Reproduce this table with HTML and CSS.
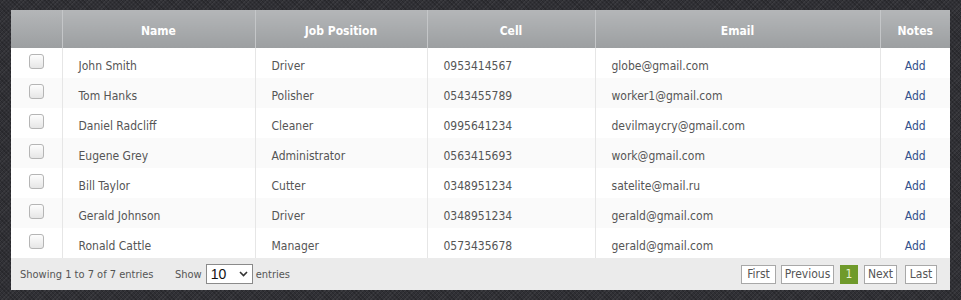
FILE: index.html
```html
<!DOCTYPE html>
<html>
<head>
<meta charset="utf-8">
<link rel="stylesheet" href="styles.css">
</head>
<body>
<div class="panel">
  <table class="grid">
    <colgroup>
      <col class="c-chk"><col class="c-name"><col class="c-job"><col class="c-cell"><col class="c-mail"><col class="c-notes">
    </colgroup>
    <thead>
      <tr><th></th><th>Name</th><th>Job Position</th><th>Cell</th><th>Email</th><th>Notes</th></tr>
    </thead>
    <tbody>
      <tr><td class="chk"><span class="box"></span></td><td>John Smith</td><td>Driver</td><td>0953414567</td><td>globe@gmail.com</td><td class="note"><a>Add</a></td></tr>
      <tr><td class="chk"><span class="box"></span></td><td>Tom Hanks</td><td>Polisher</td><td>0543455789</td><td>worker1@gmail.com</td><td class="note"><a>Add</a></td></tr>
      <tr><td class="chk"><span class="box"></span></td><td>Daniel Radcliff</td><td>Cleaner</td><td>0995641234</td><td>devilmaycry@gmail.com</td><td class="note"><a>Add</a></td></tr>
      <tr><td class="chk"><span class="box"></span></td><td>Eugene Grey</td><td>Administrator</td><td>0563415693</td><td>work@gmail.com</td><td class="note"><a>Add</a></td></tr>
      <tr><td class="chk"><span class="box"></span></td><td>Bill Taylor</td><td>Cutter</td><td>0348951234</td><td>satelite@mail.ru</td><td class="note"><a>Add</a></td></tr>
      <tr><td class="chk"><span class="box"></span></td><td>Gerald Johnson</td><td>Driver</td><td>0348951234</td><td>gerald@gmail.com</td><td class="note"><a>Add</a></td></tr>
      <tr><td class="chk"><span class="box"></span></td><td>Ronald Cattle</td><td>Manager</td><td>0573435678</td><td>gerald@gmail.com</td><td class="note"><a>Add</a></td></tr>
    </tbody>
  </table>
  <div class="footer">
    <div class="info">Showing 1 to 7 of 7 entries</div>
    <div class="length">Show <span class="select"><span class="val">10</span><svg class="caret" width="9" height="6" viewBox="0 0 9 6"><path d="M1 1 L4.5 4.5 L8 1" fill="none" stroke="#333" stroke-width="1.6"/></svg></span> entries</div>
    <div class="pager">
      <span class="pbtn p-first">First</span>
      <span class="pbtn p-prev">Previous</span>
      <span class="pbtn cur">1</span>
      <span class="pbtn p-next">Next</span>
      <span class="pbtn p-last">Last</span>
    </div>
  </div>
</div>
</body>
</html>
```
FILE: styles.css
```css
html, body { margin: 0; height: 100%; }
body {
  padding: 10px 11px;
  box-sizing: border-box;
  height: 300px;
  background-color: #303035;
  background-image:
    repeating-linear-gradient(45deg, rgba(0,0,0,0.18) 0px, rgba(0,0,0,0.18) 1px, transparent 1px, transparent 3px),
    repeating-linear-gradient(-45deg, rgba(255,255,255,0.05) 0px, rgba(255,255,255,0.05) 1px, transparent 1px, transparent 3px);
  font-family: "DejaVu Sans Condensed", "DejaVu Sans", sans-serif;
  font-size: 12px;
  color: #555;
}
.panel { width: 939px; background: #fff; }
.grid { width: 939px; border-collapse: collapse; table-layout: fixed; }
.c-chk { width: 51px; }
.c-name { width: 193px; }
.c-job { width: 172px; }
.c-cell { width: 168px; }
.c-mail { width: 285px; }
.c-notes { width: 70px; }
thead th {
  height: 38px;
  padding: 4px 0 0 0;
  background: linear-gradient(#b4b6b8, #9c9fa1);
  color: #fff;
  font-weight: bold;
  font-size: 12px;
  text-align: center;
  border-left: 1px solid #c4c6c8;
  box-sizing: border-box;
}
thead th:first-child { border-left: none; }
tbody td {
  height: 30px;
  box-sizing: border-box;
  padding: 5px 0 0 16px;
  border-left: 1px solid #e6e6e6;
  white-space: nowrap;
  overflow: hidden;
}
tbody td:first-child { border-left: none; }
tbody tr:nth-child(even) td { background: #fafafa; }
tbody td.chk { padding: 0; text-align: center; vertical-align: middle; }
.box {
  display: inline-block;
  width: 13px; height: 13px;
  border: 1px solid #b5b5b5;
  border-radius: 3px;
  background: linear-gradient(#fdfdfd, #e6e6e6);
  vertical-align: middle;
  margin-top: -4px;
}
tbody td.note { padding: 5px 0 0 0; text-align: center; }
.note a { color: #33508a; }
.footer {
  height: 32px;
  background: #ebebeb;
  display: flex;
  align-items: center;
  padding: 0 13px 0 9px;
  color: #555;
  font-size: 11px;
}
.info { width: 155px; }
.length { display: flex; align-items: center; gap: 3px; }
.select {
  display: inline-flex;
  align-items: center;
  justify-content: space-between;
  width: 47px; height: 20px;
  box-sizing: border-box;
  border: 1px solid #8a8a8a;
  background: #fff;
  padding: 0 4px 0 4px;
  margin-left: 1px;
  font-family: "Liberation Sans", Arial, sans-serif;
  font-size: 14px;
  color: #111;
}
.pager { margin-left: auto; display: flex; font-size: 12px; }
.pbtn {
  height: 19px;
  box-sizing: border-box;
  border: 1px solid #a8a8a8;
  background: #fff;
  text-align: center;
  line-height: 17px;
  color: #555;
}
.p-first { width: 35px; }
.p-prev { width: 53px; margin-left: 5px; }
.pbtn.cur { width: 18px; margin-left: 6px; background: #6f9a2b; border-color: #6f9a2b; color: #e8f2d5; }
.p-next { width: 33px; margin-left: 6px; }
.p-last { width: 32px; margin-left: 8px; }
```
